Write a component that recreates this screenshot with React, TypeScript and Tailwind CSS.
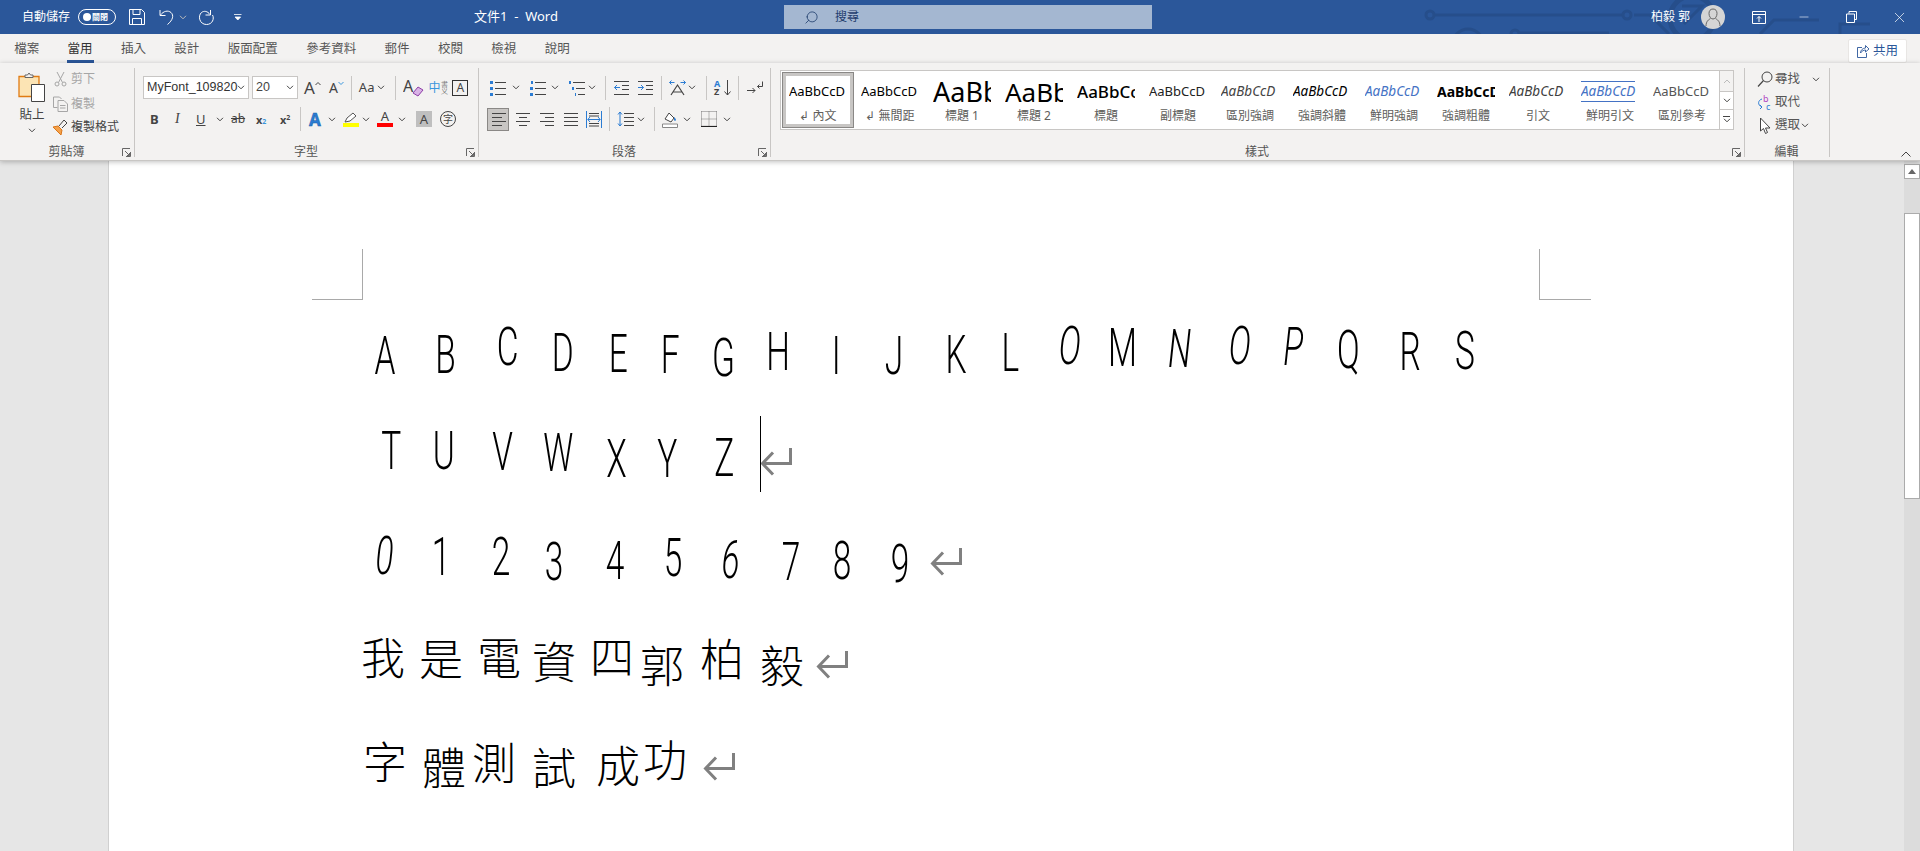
import { Minus, Search, X } from 'lucide-react';
import type { ReactNode } from 'react';

type Glyph = { c: string; x: number; dy: number; it?: boolean };

const row1: Glyph[] = [
  { c: 'A', x: 385, dy: 0 }, { c: 'B', x: 446, dy: -1 }, { c: 'C', x: 508, dy: -9 }, { c: 'D', x: 563, dy: -3 },
  { c: 'E', x: 618, dy: -2 }, { c: 'F', x: 670, dy: -1 }, { c: 'G', x: 723, dy: 2 }, { c: 'H', x: 778, dy: -4 },
  { c: 'I', x: 836, dy: 0 }, { c: 'J', x: 894, dy: 0 }, { c: 'K', x: 956, dy: -1 }, { c: 'L', x: 1010, dy: -3 },
  { c: 'O', x: 1070, dy: -10, it: true }, { c: 'M', x: 1122, dy: -8 }, { c: 'N', x: 1180, dy: -7, it: true }, { c: 'O', x: 1240, dy: -10, it: true },
  { c: 'P', x: 1293, dy: -9, it: true }, { c: 'Q', x: 1348, dy: -6 }, { c: 'R', x: 1410, dy: -4 }, { c: 'S', x: 1465, dy: -5 },
];
const row2: Glyph[] = [
  { c: 'T', x: 391, dy: -8 }, { c: 'U', x: 444, dy: -8 }, { c: 'V', x: 503, dy: -7 }, { c: 'W', x: 558, dy: -6 },
  { c: 'X', x: 617, dy: 0 }, { c: 'Y', x: 667, dy: 0 }, { c: 'Z', x: 724, dy: -1 },
];
const row3: Glyph[] = [
  { c: '0', x: 385, dy: -3, it: true }, { c: '1', x: 441, dy: -2 }, { c: '2', x: 501, dy: -2 }, { c: '3', x: 554, dy: 3 },
  { c: '4', x: 615, dy: 2 }, { c: '5', x: 673, dy: -1 }, { c: '6', x: 731, dy: 1, it: true }, { c: '7', x: 791, dy: 3 },
  { c: '8', x: 842, dy: 2 }, { c: '9', x: 900, dy: 5 },
];
const row4: Glyph[] = [
  { c: '我', x: 383, dy: -6 }, { c: '是', x: 441, dy: -5 }, { c: '電', x: 499, dy: -6 }, { c: '資', x: 554, dy: -2 },
  { c: '四', x: 612, dy: -7 }, { c: '郭', x: 662, dy: 2 }, { c: '柏', x: 722, dy: -5 }, { c: '毅', x: 782, dy: 2 },
];
const row5: Glyph[] = [
  { c: '字', x: 385, dy: -4 }, { c: '體', x: 444, dy: 2 }, { c: '測', x: 494, dy: -3 }, { c: '試', x: 554, dy: 2 },
  { c: '成', x: 618, dy: 0 }, { c: '功', x: 665, dy: -6 },
];

const styles = [
  { sample: 'AaBbCcD', label: '↲ 內文', cls: 'text-[13px] text-black' },
  { sample: 'AaBbCcD', label: '↲ 無間距', cls: 'text-[13px] text-black' },
  { sample: 'AaBb', label: '標題 1', cls: 'text-[27px] text-black' },
  { sample: 'AaBbC', label: '標題 2', cls: 'text-[26px] text-black' },
  { sample: 'AaBbCc', label: '標題', cls: 'text-[17px] font-medium text-black' },
  { sample: 'AaBbCcD', label: '副標題', cls: 'text-[13px] text-[#222]' },
  { sample: 'AaBbCcD', label: '區別強調', cls: 'text-[13.500px] italic text-[#444]' },
  { sample: 'AaBbCcD', label: '強調斜體', cls: 'text-[13.500px] italic text-black' },
  { sample: 'AaBbCcD', label: '鮮明強調', cls: 'text-[13.500px] italic text-[#4472c4]' },
  { sample: 'AaBbCcD', label: '強調粗體', cls: 'text-[14px] font-bold text-black' },
  { sample: 'AaBbCcD', label: '引文', cls: 'text-[13.500px] italic text-[#404040]' },
  { sample: 'AaBbCcD', label: '鮮明引文', cls: 'text-[13.500px] italic text-[#4472c4] border-y border-[#4472c4] py-[3px]' },
  { sample: 'AaBbCcD', label: '區別參考', cls: 'text-[13px] text-[#555]' },
];

const tabs = ['檔案', '當用', '插入', '設計', '版面配置', '參考資料', '郵件', '校閱', '檢視', '說明'];

function Chev({ className = '' }: { className?: string }) {
  return (
    <svg width="8" height="5" viewBox="0 0 8 5" className={`shrink-0 ${className}`}>
      <path d="M1 .8l3 3 3-3" stroke="#444" fill="none" />
    </svg>
  );
}

function Sep({ className = '' }: { className?: string }) {
  return <div className={`h-[24px] w-px shrink-0 bg-[#c8c6c4] ${className}`} />;
}

function Launcher() {
  return (
    <svg width="9" height="9" viewBox="0 0 9 9" className="shrink-0">
      <path d="M.5 8V.5H8M8.500 4v4.500H4M3 3l4.500 4.500M7.500 5v2.500H5" stroke="#666" fill="none" />
    </svg>
  );
}

function Lines({ d, w = 16, className = '' }: { d: string; w?: number; className?: string }) {
  return (
    <svg width={w} height="16" viewBox={`0 0 ${w} 16`} className={`shrink-0 ${className}`}>
      <path d={d} stroke="#444" fill="none" />
    </svg>
  );
}

function ReturnMark({ children }: { children?: ReactNode }) {
  return (
    <div className="relative h-[29px] w-[32px] shrink-0">
      {children}
      <svg width="32" height="29" viewBox="0 0 32 29">
        <path d="M30.500 0v15.500H3M13 4.500L2.500 15.500 13 26.500" stroke="#808080" strokeWidth="3" fill="none" />
      </svg>
    </div>
  );
}

function HandRow({ glyphs, cjk, className, mark, arrowGap, caret }: { glyphs: Glyph[]; cjk?: boolean; className: string; mark?: boolean; arrowGap?: number; caret?: boolean }) {
  return (
    <div className={`flex items-end ${className}`}>
      {glyphs.map((g, i) => {
        const left = i === 0 ? g.x - 24 - 109 : g.x - glyphs[i - 1].x - 48;
        return (
          <span
            key={i}
            style={{ marginLeft: left, transform: `translateY(${g.dy}px)` }}
            className={`block h-[48px] w-[48px] shrink-0 text-center leading-[48px] text-black ${
              cjk
                ? "font-['Noto_Sans_CJK_TC',sans-serif] text-[44px] font-light"
                : "font-['Roboto',sans-serif] text-[54px] font-light"
            }`}
          >
            <span className={cjk ? 'inline-block' : g.it ? 'inline-block scale-x-[0.62] italic' : 'inline-block scale-x-[0.62]'}>{g.c}</span>
          </span>
        );
      })}
      {mark ? (
        <div style={{ marginLeft: arrowGap }} className="mb-[6px]">
          <ReturnMark>
            {caret ? <div className="absolute -top-[32px] left-0 h-[76px] w-px bg-black" /> : null}
          </ReturnMark>
        </div>
      ) : null}
    </div>
  );
}

function TitleBar() {
  return (
    <div className="relative flex h-[34px] shrink-0 items-center overflow-hidden bg-[#2b579a] text-white">
      <svg width="500" height="34" viewBox="0 0 500 34" className="absolute left-[1420px] top-0">
        <g stroke="#264e8b" strokeWidth="3" fill="none">
          <circle cx="10" cy="15" r="4" />
          <path d="M14 15h188M214 15h16l19 19" />
          <circle cx="207" cy="15" r="4" />
          <circle cx="48" cy="44" r="15" />
          <circle cx="95" cy="34" r="4" />
          <path d="M99 33h90" />
          <circle cx="272" cy="18" r="22" strokeWidth="5" />
          <path d="M262 6h20l-18 18" />
          <path d="M340 34l14-14h45" />
          <path d="M420 34v-10h30" />
        </g>
      </svg>
      <span className="relative ml-[22px] text-[12px]">自動儲存</span>
      <div className="relative ml-[8px] flex h-[16px] w-[38px] items-center gap-[1px] rounded-full border border-white pl-[4px]">
        <div className="h-[8px] w-[8px] rounded-full bg-white" />
        <span className="text-[8px] font-bold leading-none">關閉</span>
      </div>
      <svg width="16" height="16" viewBox="0 0 16 16" className="relative ml-[13px]">
        <path d="M.5.500h12l3 3v12H.5zM4 .5v5h7v-5M3.500 15.500v-6h9v6" stroke="#fff" fill="none" />
      </svg>
      <svg width="16" height="17" viewBox="0 0 16 17" className="relative ml-[14px]">
        <path d="M1 1v5.500h5.500M1.500 6c3-4 7.500-5 10.500-2.500 3 2.800 2 7.500-3.500 12" stroke="#fff" fill="none" />
      </svg>
      <Chev className="relative ml-[4px] invert" />
      <svg width="17" height="17" viewBox="0 0 17 17" className="relative ml-[11px]">
        <path d="M12.500 1v5h-5M12 5.500C9.500 2 6 1.500 3.500 3.500-.5 7 1.500 15.500 8.500 15.500c6 0 8-6 6-9.500" stroke="#fff" fill="none" />
      </svg>
      <svg width="8" height="8" viewBox="0 0 8 8" className="relative ml-[19px]">
        <path d="M0 1.500h7.500M1 4l2.800 3 2.800-3z" stroke="#fff" fill="#fff" strokeWidth=".8" />
      </svg>
      <span className="relative ml-[232px] whitespace-pre text-[13px]">文件1  -  Word</span>
      <div className="relative ml-[226px] flex h-[24px] w-[368px] items-center bg-[#a4b7d1] text-[#1f3d6d]">
        <Search size={15} strokeWidth={1.3} className="ml-[20px] -scale-x-100" />
        <span className="ml-[16px] text-[12px]">搜尋</span>
      </div>
      <span className="relative ml-[499px] text-[12px]">柏毅 郭</span>
      <div className="relative ml-[11px] flex h-[24px] w-[24px] items-center justify-center rounded-full bg-[#d5d5d5]">
        <svg width="18" height="20" viewBox="0 0 18 20">
          <path d="M9 2c2.800 0 4 2 4 4.500S11.500 12 9 12 5 9 5 6.500 6.200 2 9 2zM2 19c0-5 3-6.500 4.500-7.500M16 19c0-5-3-6.500-4.500-7.500" stroke="#666" fill="none" />
        </svg>
      </div>
      <svg width="14" height="13" viewBox="0 0 14 13" className="relative ml-[27px]">
        <path d="M.5.500h13v12H.5zM.5 3.500h13M7 11V5.500M5 7.500l2-2 2 2" stroke="#fff" fill="none" />
      </svg>
      <Minus size={14} strokeWidth={1} className="relative ml-[31px]" />
      <svg width="11" height="12" viewBox="0 0 11 12" className="relative ml-[35px]">
        <path d="M3 2.500V.5h7.500v8H8.500M.5 3h8v8.500h-8z" stroke="#fff" fill="none" />
      </svg>
      <X size={17} strokeWidth={1} className="relative ml-[34px]" />
    </div>
  );
}

function TabRow() {
  return (
    <div className="flex h-[29px] shrink-0 items-center justify-between bg-[#f3f2f1] pr-[13px]">
      <div className="flex h-full">
        {tabs.map((t) => (
          <div key={t} className={`relative flex items-center px-[14.200px] pt-[1px] text-[12.5px] ${t === '當用' ? 'text-[#333]' : 'text-[#555]'}`}>
            {t}
            {t === '當用' ? <div className="absolute bottom-0 left-[14px] h-[3px] w-[27px] bg-[#2b579a]" /> : null}
          </div>
        ))}
      </div>
      <div className="mt-[5px] flex h-[24px] w-[59px] items-center justify-center gap-[4px] rounded-[2px] border border-[#e8e6e4] bg-white text-[12.5px] text-[#2b579a]">
        <svg width="12" height="14" viewBox="0 0 12 14">
          <path d="M5 3.500H.5v10h9V9M3.500 9c0-3 2.500-5 5-5V1.500L12 5 8.500 8V6C6.500 6 5 7 3.500 9z" stroke="#2b579a" fill="none" strokeWidth=".9" />
        </svg>
        共用
      </div>
    </div>
  );
}

function Group({ w, label, launcher, children }: { w: string; label: string; launcher?: boolean; children: ReactNode }) {
  return (
    <div className={`flex h-[89px] shrink-0 flex-col border-r border-[#c8c6c4] ${w}`}>
      <div className="min-h-0 flex-1">{children}</div>
      <div className="relative flex h-[10px] items-center justify-center pr-[1px] text-[12px] leading-none text-[#555]">
        {label}
        {launcher ? <div className="absolute bottom-[0px] right-[3px] flex"><Launcher /></div> : null}
      </div>
    </div>
  );
}

function ClipboardGroup() {
  return (
    <Group w="w-[135px]" label="剪貼簿" launcher>
      <div className="flex h-full pl-[17px]">
        <div className="flex w-[30px] flex-col items-center pt-[4px]">
          <svg width="28" height="30" viewBox="0 0 28 30" className="shrink-0">
            <path d="M1 4.500h20v20H1z" fill="#fce4b4" stroke="#e07b13" strokeWidth="1.300" />
            <path d="M7 5V3h2.500l1.500-2 1.500 2H15v2.500H7z" fill="#f3f2f1" stroke="#666" />
            <path d="M13.500 12.500h13v17h-13z" fill="#fff" stroke="#444" />
          </svg>
          <span className="mt-[5px] text-[12.5px] leading-[16px] text-[#444]">貼上</span>
          <Chev className="mt-[5px]" />
        </div>
        <div className="ml-[6px] flex flex-col text-[12px] leading-none">
          <div className="flex h-[22px] items-center text-[#a6a6a6]">
            <svg width="16" height="16" viewBox="0 0 16 16" className="shrink-0">
              <path d="M4 1l5.500 10.500M11 1L5.500 11.500" stroke="#a6a6a6" fill="none" />
              <circle cx="4" cy="13" r="2" stroke="#a6a6a6" fill="none" />
              <circle cx="11" cy="13" r="2" stroke="#a6a6a6" fill="none" />
            </svg>
            <span className="ml-[2px]">剪下</span>
          </div>
          <div className="mt-[3px] flex h-[22px] items-center text-[#a6a6a6]">
            <svg width="16" height="16" viewBox="0 0 16 16" className="shrink-0">
              <path d="M.5 1h6l2 2M.5 1v10.500h4M5 4.500h6l3.500 3.500v7.500H5zM7 9.500h5.500M7 12h5.500" stroke="#a6a6a6" fill="none" />
            </svg>
            <span className="ml-[2px]">複製</span>
          </div>
          <div className="mt-[1px] flex h-[22px] items-center text-[#444]">
            <svg width="17" height="17" viewBox="0 0 17 17" className="-ml-[1px] shrink-0">
              <path d="M1 8l5-1 4 4-1 5z" fill="#f4a14a" stroke="#d9761a" />
              <path d="M7 7l5-6 3 3-5 5" fill="none" stroke="#444" />
            </svg>
            <span className="ml-[2px]">複製格式</span>
          </div>
        </div>
      </div>
    </Group>
  );
}

function FontGroup() {
  return (
    <Group w="w-[344px]" label="字型" launcher>
      <div className="flex h-[31px] items-end pl-[8px] text-[#444]">
        <div className="flex h-[23px] w-[106px] items-center justify-between border border-[#c8c6c4] bg-white pl-[3px] pr-[3px] font-['Liberation_Sans',sans-serif] text-[12.5px]">
          <span className="whitespace-nowrap text-[#333]">MyFont_109820</span>
          <Chev />
        </div>
        <div className="ml-[3px] flex h-[23px] w-[46px] items-center justify-between border border-[#c8c6c4] bg-white pl-[3px] pr-[3px] font-['Liberation_Sans',sans-serif] text-[12.5px]">
          <span>20</span>
          <Chev />
        </div>
        <div className="ml-[6px] flex h-[23px] items-center">
          <span className="text-[17px] leading-none">A</span>
          <svg width="6" height="5" viewBox="0 0 6 5" className="mb-[8px]"><path d="M.5 4L3 1.500 5.500 4" stroke="#444" fill="none" /></svg>
          <span className="ml-[8px] text-[14px] leading-none">A</span>
          <svg width="6" height="5" viewBox="0 0 6 5" className="mb-[8px]"><path d="M.5 1L3 3.500 5.500 1" stroke="#3a96dd" fill="none" /></svg>
          <Sep className="ml-[7px]" />
          <span className="ml-[7px] text-[13px] leading-none">Aa</span>
          <Chev className="ml-[3px]" />
          <Sep className="ml-[10px]" />
          <svg width="22" height="18" viewBox="0 0 22 18" className="ml-[7px]">
            <text x="0" y="13" fontSize="16" fill="#444" fontFamily="Noto Sans">A</text>
            <path d="M10 14l5-6 5 3-5 6z" fill="#d9b3e6" stroke="#8e3fa8" />
          </svg>
          <div className="ml-[3px] flex w-[18px] items-center text-[#3a96dd]">
            <span className="text-[12px] leading-none">中</span>
            <span className="text-[7px] leading-[7px] text-[#777] [writing-mode:vertical-rl]">書义</span>
          </div>
          <div className="ml-[6px] flex h-[16px] w-[16px] items-center justify-center border border-[#333] text-[12px] leading-none">A</div>
        </div>
      </div>
      <div className="mt-[8px] flex h-[24px] items-center pl-[15px] text-[#444]">
        <span className="w-[8px] text-[13px] font-bold leading-none">B</span>
        <span className="ml-[17px] w-[8px] font-['Liberation_Serif',serif] text-[14px] italic leading-none">I</span>
        <span className="ml-[13px] w-[10px] text-[13px] leading-none underline">U</span>
        <Chev className="ml-[10px]" />
        <span className="ml-[7px] w-[17px] text-[12px] leading-none line-through">ab</span>
        <span className="ml-[8px] flex w-[12px] items-end text-[11px] font-bold leading-none">x<span className="text-[7px] text-[#3a96dd]">2</span></span>
        <span className="ml-[12px] flex w-[12px] items-start text-[11px] font-bold leading-none">x<span className="text-[7px]">2</span></span>
        <Sep className="ml-[8px]" />
        <span className="ml-[8px] w-[16px] text-[17px] font-bold leading-none text-[#2b7cd3] [-webkit-text-stroke:0.5px_#1a5fa8]">A</span>
        <Chev className="ml-[3px]" />
        <div className="ml-[7px] flex w-[16px] flex-col items-center">
          <svg width="14" height="11" viewBox="0 0 14 11"><path d="M1 10l2-4 6-5 3 3-6 5z" fill="#fff" stroke="#555" /></svg>
          <div className="h-[4px] w-[16px] bg-[#ffff00]" />
        </div>
        <Chev className="ml-[3px]" />
        <div className="ml-[7px] flex w-[16px] flex-col items-center">
          <span className="text-[13px] leading-[11px]">A</span>
          <div className="mt-[1px] h-[4px] w-[16px] bg-[#ff0000]" />
        </div>
        <Chev className="ml-[5px]" />
        <div className="ml-[10px] flex h-[16px] w-[16px] items-center justify-center bg-[#bfbfbf] text-[13px] leading-none">A</div>
        <div className="ml-[8px] flex h-[16px] w-[16px] items-center justify-center rounded-full border border-[#444] text-[10px] leading-none">字</div>
      </div>
    </Group>
  );
}

function ParagraphGroup() {
  return (
    <Group w="w-[292px]" label="段落" launcher>
      <div className="flex h-[31px] items-end pl-[11px]">
        <div className="flex h-[23px] items-center">
          <svg width="16" height="16" viewBox="0 0 16 16" className="shrink-0">
            <path d="M0 1h3v3H0zM0 7h3v3H0zM0 13h3v3H0z" fill="#2b7cd3" />
            <path d="M5 2.500h11M5 8.500h11M5 14.500h11" stroke="#444" />
          </svg>
          <Chev className="ml-[6px]" />
          <svg width="16" height="16" viewBox="0 0 16 16" className="ml-[10px] shrink-0">
            <path d="M1 1h2v3H1zM0 7h3v3H0zM0 13h3v3H0z" fill="#2b7cd3" />
            <path d="M5 2.500h11M5 8.500h11M5 14.500h11" stroke="#444" />
          </svg>
          <Chev className="ml-[5px]" />
          <svg width="16" height="16" viewBox="0 0 16 16" className="ml-[10px] shrink-0">
            <path d="M0 1h2v3H0zM3 7h2v3H3zM6 13h1v3H6z" fill="#2b7cd3" />
            <path d="M4 2.500h12M7 8.500h9M9 14.500h7" stroke="#444" />
          </svg>
          <Chev className="ml-[3px]" />
          <Sep className="ml-[9px]" />
          <svg width="15" height="16" viewBox="0 0 15 16" className="ml-[8px] shrink-0">
            <path d="M0 1.500h15M8 5.500h7M8 9.500h7M0 14.500h15" stroke="#444" />
            <path d="M6 7.500H.5M3 5l-2.500 2.500L3 10" stroke="#2b7cd3" fill="none" />
          </svg>
          <svg width="15" height="16" viewBox="0 0 15 16" className="ml-[9px] shrink-0">
            <path d="M0 1.500h15M8 5.500h7M8 9.500h7M0 14.500h15" stroke="#444" />
            <path d="M0 7.500h5.500M3 5l2.500 2.500L3 10" stroke="#2b7cd3" fill="none" />
          </svg>
          <Sep className="ml-[8px]" />
          <svg width="17" height="16" viewBox="0 0 17 16" className="ml-[7px] shrink-0">
            <path d="M2 15L8.500 5 15 15M4 12h9" stroke="#444" fill="none" strokeWidth="1.200" />
            <path d="M.5 2.500h5M2.500.5L.5 2.500l2 2M11.500 2.500h5M14.500.5l2 2-2 2" stroke="#2b7cd3" fill="none" />
          </svg>
          <Chev className="ml-[2px]" />
          <Sep className="ml-[10px]" />
          <div className="ml-[7px] flex w-[9px] flex-col text-[9px] font-bold leading-[8px]">
            <span className="text-[#2b7cd3]">A</span>
            <span className="text-[#444]">Z</span>
          </div>
          <svg width="7" height="16" viewBox="0 0 7 16" className="ml-[1px] shrink-0"><path d="M3.500 0v15M.5 11.500l3 3.500 3-3.500" stroke="#444" fill="none" /></svg>
          <Sep className="ml-[7px]" />
          <svg width="16" height="14" viewBox="0 0 16 14" className="ml-[8px] shrink-0">
            <path d="M0 9.500h8M5.500 7l2.500 2.500L5.500 12M15.500.5v5h-5M12.500 3.500l-2 2 2 2" stroke="#444" fill="none" />
          </svg>
        </div>
      </div>
      <div className="mt-[8px] flex h-[24px] items-center pl-[8px]">
        <div className="flex h-[23px] w-[22px] items-center justify-center border border-[#8a8886] bg-[#c8c6c4]">
          <Lines d="M2 2.500h14M2 6.500h10M2 10.500h14M2 14.500h10" />
        </div>
        <Lines className="ml-[6px]" d="M1 2.500h14M4 6.500h8M1 10.500h14M4 14.500h8" />
        <Lines className="ml-[8px]" d="M1 2.500h14M6 6.500h9M1 10.500h14M6 14.500h9" />
        <Lines className="ml-[8px]" d="M1 2.500h14M1 6.500h14M1 10.500h14M1 14.500h14" />
        <svg width="16" height="17" viewBox="0 0 16 17" className="ml-[7px] shrink-0">
          <path d="M.5 0v17M15.500 0v17M2 8.500h12M4 6L1.800 8.500 4 11M12 6l2.200 2.500L12 11" stroke="#2b7cd3" fill="none" />
          <path d="M3 2.500h10M3 5h10M3 12.500h10M3 15h10" stroke="#444" />
        </svg>
        <Sep className="ml-[7px]" />
        <svg width="17" height="16" viewBox="0 0 17 16" className="ml-[7px] shrink-0">
          <path d="M3 1v14M1 3.500L3 1l2 2.500M1 12.500L3 15l2-2.500" stroke="#2b7cd3" fill="none" />
          <path d="M7 2.500h10M7 6.500h10M7 10.500h10M7 14.500h10" stroke="#444" />
        </svg>
        <Chev className="ml-[3px]" />
        <Sep className="ml-[9px]" />
        <svg width="16" height="17" viewBox="0 0 16 17" className="ml-[7px] shrink-0">
          <path d="M3 8l4-6 5 5-3 4z" fill="#fff" stroke="#444" />
          <path d="M12 6c1 1 2 2 2 3s-2 1-2 0z" fill="#2b7cd3" />
          <path d="M.5 13h15v3.500H.5z" fill="#fff" stroke="#888" />
        </svg>
        <Chev className="ml-[5px]" />
        <svg width="16" height="16" viewBox="0 0 16 16" className="ml-[10px] shrink-0">
          <path d="M.5.500h15M.5 8h15M8 .5v15M.5.500v15M15.500.5v15" stroke="#777" strokeDasharray="1 1" fill="none" />
          <path d="M0 15.500h16" stroke="#222" strokeWidth="1.200" />
        </svg>
        <Chev className="ml-[6px]" />
      </div>
    </Group>
  );
}

function StylesGroup() {
  return (
    <Group w="w-[974px]" label="樣式" launcher>
      <div className="ml-[9px] mt-[2px] flex h-[60px] w-[954px] border border-[#c8c6c4] bg-white">
        <div className="flex flex-1 pl-[1px] pt-[1px]">
          {styles.map((s, i) => (
            <div
              key={s.label}
              className={`flex h-[56px] w-[72px] shrink-0 flex-col items-center ${
                i === 0 ? 'border border-[#8a8886]' : 'border border-transparent'
              }`}
            >
              <div className={`flex h-full w-full flex-col items-center ${i === 0 ? 'border-[3px] border-[#c8c6c4]' : 'border-[3px] border-transparent'}`}>
                <div className="flex h-[32px] w-[58px] items-center justify-start overflow-hidden whitespace-nowrap">
                  <span className={`leading-none ${s.cls}`}>{s.sample}</span>
                </div>
                <span className="mt-[1px] whitespace-nowrap text-[12px] leading-[16px] text-[#605e5c]">{s.label}</span>
              </div>
            </div>
          ))}
        </div>
        <div className="flex w-[14px] shrink-0 flex-col border-l border-[#c8c6c4] bg-[#f3f2f1]">
          <div className="flex h-[20px] items-center justify-center">
            <svg width="8" height="5" viewBox="0 0 8 5"><path d="M1 4l3-3 3 3" stroke="#bbb" fill="none" /></svg>
          </div>
          <div className="flex h-[19px] items-center justify-center border-y border-[#c8c6c4] bg-white">
            <Chev />
          </div>
          <div className="flex flex-1 flex-col items-center justify-center gap-[1px] bg-white">
            <div className="h-px w-[7px] bg-[#444]" />
            <Chev />
          </div>
        </div>
      </div>
    </Group>
  );
}

function EditGroup() {
  return (
    <Group w="w-[85px]" label="編輯">
      <div className="flex flex-col pl-[12px] pt-[0px] text-[12.5px] leading-none text-[#555]">
        <div className="flex h-[23px] items-center">
          <svg width="16" height="17" viewBox="0 0 16 17" className="shrink-0">
            <circle cx="10" cy="6" r="5" fill="none" stroke="#444" />
            <path d="M6.500 9.500L1 15.500" stroke="#444" strokeWidth="1.200" />
          </svg>
          <span className="ml-[2px] w-[25px]">尋找</span>
          <Chev className="ml-[12px]" />
        </div>
        <div className="flex h-[23px] items-center">
          <svg width="16" height="17" viewBox="0 0 16 17" className="shrink-0">
            <text x="6" y="8" fontSize="9" fill="#b146c2" fontFamily="Noto Sans">b</text>
            <text x="9" y="16" fontSize="9" fill="#2b7cd3" fontFamily="Noto Sans">c</text>
            <path d="M5 5C1 6 0 11 5 13M3 11l2 2-2 2" stroke="#2b7cd3" fill="none" />
          </svg>
          <span className="ml-[2px]">取代</span>
        </div>
        <div className="flex h-[23px] items-center">
          <svg width="16" height="18" viewBox="0 0 16 18" className="shrink-0">
            <path d="M3.500 1v13l3-2.500 2 5 2-1-2-4.500h4.500z" fill="#fff" stroke="#444" />
          </svg>
          <span className="ml-[2px] w-[25px]">選取</span>
          <Chev className="ml-[1px]" />
        </div>
      </div>
    </Group>
  );
}

function Ribbon() {
  return (
    <div className="relative z-10 flex h-[98px] shrink-0 border-b border-[#c8c6c4] bg-[#f3f2f1] shadow-[0_1px_5px_rgba(0,0,0,0.25)]">
      <div className="flex h-full flex-1 flex-col">
        <div className="flex h-[94px] items-start pt-[5px]">
          <ClipboardGroup />
          <FontGroup />
          <ParagraphGroup />
          <StylesGroup />
          <EditGroup />
          <div className="flex h-[89px] flex-1 items-end justify-end pb-[0px] pr-[9px]">
            <svg width="10" height="6" viewBox="0 0 10 6"><path d="M.5 5.500L5 1l4.500 4.500" stroke="#444" fill="none" /></svg>
          </div>
        </div>
      </div>
    </div>
  );
}

function Scrollbar() {
  return (
    <div className="flex w-[16px] shrink-0 flex-col bg-[#dcdcdc] pt-[3px]">
      <div className="flex h-[15px] items-center justify-center border border-[#ababab] bg-white">
        <div className="h-0 w-0 border-x-[4px] border-b-[5px] border-x-transparent border-b-[#666]" />
      </div>
      <div className="mt-[34px] h-[286px] border border-[#ababab] bg-white" />
    </div>
  );
}

export default function App() {
  return (
    <div className="flex h-[851px] w-[1920px] flex-col overflow-hidden bg-[#e6e6e6] font-['Noto_Sans','Noto_Sans_CJK_TC',sans-serif]">
      <TitleBar />
      <TabRow />
      <Ribbon />
      <div className="flex min-h-0 flex-1">
        <div className="flex-1 pl-[108px]">
          <div className="h-full w-[1686px] border-x border-[#d0d0d0] bg-white">
            <div className="flex justify-between pl-[203px] pr-[202px] pt-[88px]">
              <div className="h-[51px] w-[51px] border-b border-r border-[#a9a9a9]" />
              <div className="h-[51px] w-[52px] border-b border-l border-[#a9a9a9]" />
            </div>
            <HandRow glyphs={row1} className="h-[80px]" />
            <HandRow glyphs={row2} className="h-[103px]" mark arrowGap={12} caret />
            <HandRow glyphs={row3} className="h-[100px]" mark arrowGap={6} />
            <HandRow glyphs={row4} cjk className="h-[103px]" mark arrowGap={10} />
            <HandRow glyphs={row5} cjk className="h-[102px]" mark arrowGap={14} />
          </div>
        </div>
        <Scrollbar />
      </div>
    </div>
  );
}
